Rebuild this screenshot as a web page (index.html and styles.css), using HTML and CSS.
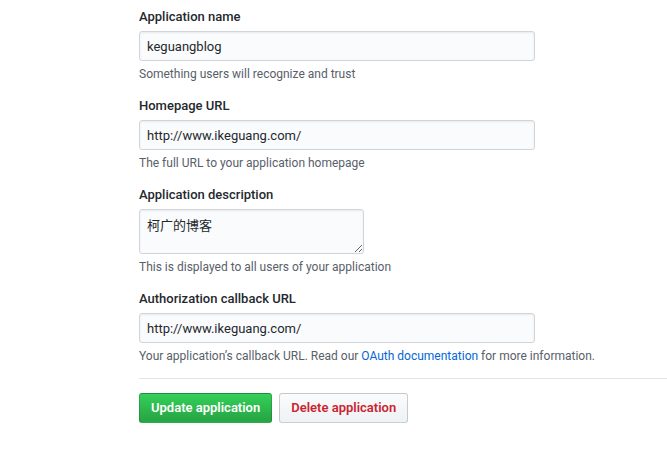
FILE: index.html
```html
<!DOCTYPE html>
<html lang="en">
<head>
<meta charset="utf-8">
<title>Application settings</title>
<link rel="stylesheet" href="styles.css">
</head>
<body>
<form class="app-form">
  <div class="form-group">
    <label class="form-label">Application name</label>
    <input class="form-control input-wide" type="text" value="keguangblog">
    <p class="note">Something users will recognize and trust</p>
  </div>
  <div class="form-group">
    <label class="form-label">Homepage URL</label>
    <input class="form-control input-wide" type="text" value="http://www.ikeguang.com/">
    <p class="note">The full URL to your application homepage</p>
  </div>
  <div class="form-group">
    <label class="form-label">Application description</label>
    <textarea class="form-control textarea-short">柯广的博客</textarea>
    <p class="note">This is displayed to all users of your application</p>
  </div>
  <div class="form-group">
    <label class="form-label">Authorization callback URL</label>
    <input class="form-control input-wide" type="text" value="http://www.ikeguang.com/">
    <p class="note">Your application’s callback URL. Read our <a class="link" href="#">OAuth documentation</a> for more information.</p>
  </div>
  <hr class="divider">
  <div class="actions">
    <button type="button" class="btn btn-primary">Update application</button>
    <button type="button" class="btn btn-danger">Delete application</button>
  </div>
</form>
</body>
</html>
```
FILE: styles.css
```css
html, body {
  margin: 0;
  padding: 0;
  background: #ffffff;
}
body {
  font-family: Roboto, "Noto Sans CJK SC", sans-serif;
  color: #24292e;
  font-size: 14px;
}
.app-form {
  margin-left: 139px;
  padding-top: 6px;
}
.form-group {
  margin-bottom: 12px;
}
.form-label {
  display: block;
  font-weight: 500;
  font-size: 13px;
  line-height: 22px;
  margin-bottom: 3px;
  color: #24292e;
}
.form-control {
  display: block;
  box-sizing: border-box;
  font-family: Roboto, "Noto Sans CJK SC", sans-serif;
  font-size: 13px;
  line-height: 20px;
  color: #24292e;
  background: #fafbfc;
  border: 1px solid #d1d5da;
  border-radius: 3px;
  box-shadow: inset 0 1px 2px rgba(27, 31, 35, 0.075);
  padding: 4px 7px;
  margin: 0;
  outline: none;
}
.input-wide {
  width: 396px;
  height: 30px;
}
.textarea-short {
  width: 225px;
  height: 45px;
  resize: vertical;
  font-family: "Noto Sans CJK SC", Roboto, sans-serif;
  font-size: 13px;
  padding: 5px 7px;
}
.note {
  margin: 4px 0 0;
  font-size: 12px;
  line-height: 18px;
  color: #586069;
}
.link {
  color: #0366d6;
  text-decoration: none;
}
.divider {
  margin: 13px 0 14px;
  border: 0;
  height: 1px;
  background: #e1e4e8;
}
.actions {
  display: flex;
  gap: 7px;
}
.btn {
  box-sizing: border-box;
  height: 30px;
  padding: 0 11px;
  font-family: Roboto, sans-serif;
  font-size: 13px;
  font-weight: 600;
  line-height: 20px;
  border: 1px solid rgba(27, 31, 35, 0.2);
  border-radius: 3px;
  cursor: pointer;
}
.btn-primary {
  color: #ffffff;
  background: linear-gradient(-180deg, #34d058 0%, #28a745 90%);
}
.btn-danger {
  color: #cb2431;
  background: linear-gradient(-180deg, #fafbfc 0%, #eff3f6 90%);
}
```
